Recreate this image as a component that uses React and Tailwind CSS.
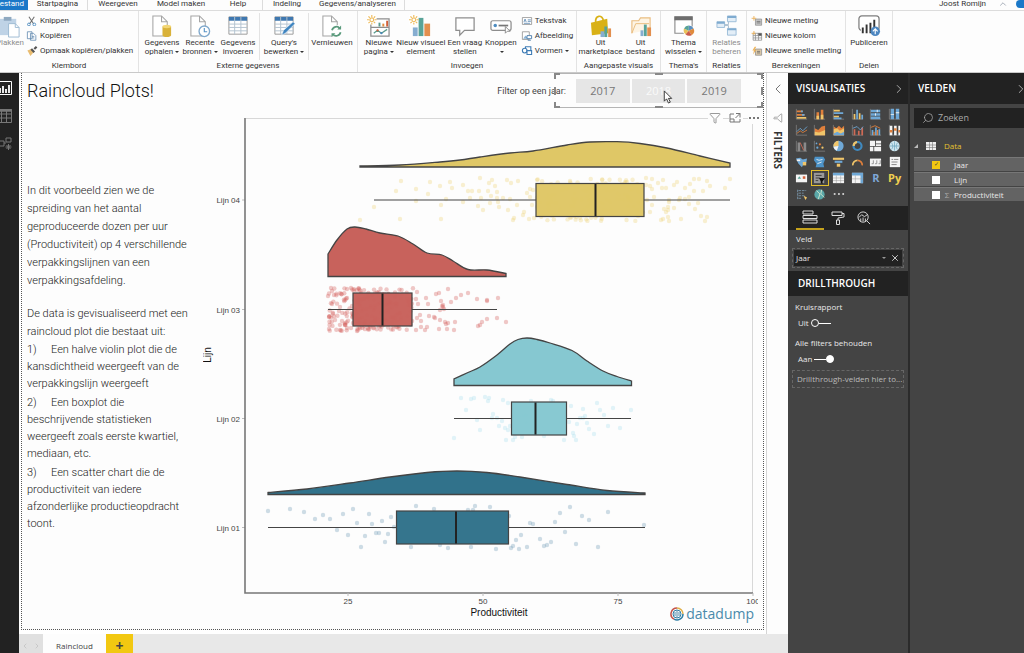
import React, { useState } from 'react';
import { ChevronLeft, ChevronRight, ChevronUp, Filter, Search, X } from 'lucide-react';

const O = '#e0803c';
const B = '#6fa8d6';
const Y = '#f0c56a';
const W = '#f4f4f4';
const G = '#8a8a8a';

// ---------- ribbon icons ----------
const Sheet = () => <path d="M3 1h9l6 6v15H3zM12 1v6h6" fill="#fff" stroke="#a5a5a5" strokeWidth="1.1" />;

const Sun = () => (
  <g stroke="#eebb5c" strokeWidth="1.2" fill="none">
    <circle cx="5" cy="5" r="2" />
    <path d="M5 0v2M5 8v2M0 5h2M8 5h2M1.5 1.5l1.4 1.4M7.1 7.1l1.4 1.4M1.5 8.5l1.4-1.4M7.1 2.9l1.4-1.4" />
  </g>
);

const SheetGrid = () => (
  <>
    <path d="M3 2h19v18H3z" fill="#fff" stroke="#9a9a9a" />
    <path d="M3 2h19v4H3z" fill="#3f78b0" />
    <path d="M3 9.500h19M3 13h19M3 16.500h19M9 2v18M15.500 2v18" stroke="#b4c3d0" />
  </>
);

const ribbonIcons = {
  paste: (
    <>
      <path d="M1 4h18v17H1z" fill="#bfd3e6" />
      <path d="M6 2h8v4H6z" fill="#8fa9c0" />
      <path d="M11 9h7l4 4v10H11z" fill="#fff" stroke="#9ebbd3" />
      <path d="M18 9v4h4" fill="none" stroke="#9ebbd3" />
    </>
  ),
  getData: (
    <>
      <Sheet />
      <path d="M13 12v9c0 2.500 9 2.500 9 0v-9z" fill="#d9b23a" />
      <ellipse cx="17.500" cy="12" rx="4.500" ry="1.800" fill="#f2d676" />
    </>
  ),
  recent: (
    <>
      <Sheet />
      <circle cx="17" cy="17" r="5.500" fill="#fff" stroke="#7fa8cc" strokeWidth="1.400" />
      <path d="M17 13.500v4h3" fill="none" stroke="#5b95c7" strokeWidth="1.200" />
    </>
  ),
  enter: <SheetGrid />,
  query: (
    <>
      <SheetGrid />
      <path d="M10 21l2-5L22 7l2 2-10 10z" fill="#3f85c0" stroke="#fff" strokeWidth=".6" />
    </>
  ),
  refresh: (
    <>
      <Sheet />
      <circle cx="17" cy="17" r="6.500" fill="#fff" />
      <path d="M12.500 16c1-4 6-5 8-2M21.500 18c-1 4-6 5-8 2" fill="none" stroke="#5a9a7c" strokeWidth="1.800" />
      <path d="M22 11v4h-4zM12 23v-4h4z" fill="#5a9a7c" />
    </>
  ),
  page: (
    <>
      <path d="M4 4h19v18H4zM4 13h19" fill="#fff" stroke="#8d8d8d" strokeWidth="1.300" />
      <path d="M7 19l4-3 4 3 6-4" fill="none" stroke="#5a9a8c" strokeWidth="1.300" />
      <path d="M12 8h2v4h-2z" fill="#5a9a8c" />
      <path d="M16 9h2v3h-2z" fill="#e08a3c" />
      <path d="M20 6h2v6h-2z" fill="#d2603a" />
      <circle cx="11" cy="16" r="1.200" fill="#d2603a" />
      <circle cx="15" cy="19" r="1.200" fill="#4a86b8" />
      <path d="M0 0h10v10H0z" fill="#fff" />
      <Sun />
    </>
  ),
  visual: (
    <>
      <path d="M4 13h5v9H4z" fill="#86add0" />
      <path d="M10 3h5v19h-5z" fill="#58a398" />
      <path d="M16 9h6v13h-6z" fill="#e28f4e" />
      <path d="M0 0h9v10H0z" fill="#fff" />
      <Sun />
    </>
  ),
  question: <path d="M3 3h19v13H12l-5 5v-5H3z" fill="#fff" stroke="#8d8d8d" strokeWidth="1.300" />,
  buttons: (
    <>
      <rect x="2" y="6" width="21" height="10" rx="2" fill="#fff" stroke="#8d8d8d" strokeWidth="1.300" />
      <circle cx="6.500" cy="11" r="1.800" fill="#4e8cc0" />
      <path d="M10 11h10" stroke="#777" strokeWidth="1.800" />
      <path d="M17 12l5 5h-3l-2 2z" fill="#fff" stroke="#8d8d8d" />
    </>
  ),
  market: (
    <>
      <path d="M2 8l17-4 1 15-17 2z" fill="#d9b116" />
      <path d="M7 8c-1-8 7-9 8-2" fill="none" stroke="#d9b116" strokeWidth="1.800" />
      <path d="M12 17h4v6h-4z" fill="#86add0" />
      <path d="M16 12h3v11h-3z" fill="#58a398" />
      <path d="M20 14h3v9h-3z" fill="#e28f4e" />
    </>
  ),
  file: (
    <>
      <path d="M3 19V6h7l2-3h10v12" fill="#fdf4e4" stroke="#e9bd80" strokeWidth="1.200" />
      <path d="M3 19l4-10h14" fill="none" stroke="#e9bd80" />
      <path d="M12 16h3v6h-3z" fill="#86add0" />
      <path d="M15.500 10h3v12h-3z" fill="#58a398" />
      <path d="M19 13h4v9h-4z" fill="#e28f4e" />
    </>
  ),
  theme: (
    <>
      <path d="M3 2h18v17H3z" fill="#fff" stroke="#8d8d8d" strokeWidth="1.200" />
      <path d="M2.500 1.500h19v4h-19z" fill="#6d6d6d" />
      <circle cx="17.500" cy="16.500" r="6" fill="#fff" />
      <path d="M17.500 16.500V11a5.500 5.500 0 0 1 5 3z" fill="#5b8fbf" />
      <path d="M17.500 16.500l5-2.500a5.500 5.500 0 0 1-2 7z" fill="#e08a3c" />
      <path d="M17.500 16.500l3 4.500a5.500 5.500 0 0 1-6.500-1z" fill="#c95a4a" />
      <path d="M17.500 16.500L14 20a5.500 5.500 0 0 1-1.500-6z" fill="#e9c25a" />
      <path d="M17.500 16.500l-5-2.500a5.500 5.500 0 0 1 5-3z" fill="#58a398" />
    </>
  ),
  relations: (
    <>
      <path d="M9 10h5V4M9 11h5v7" fill="none" stroke="#a9bdce" />
      <g fill="#e3eef7" stroke="#9dbdd8">
        <path d="M2 7h8v6H2zM13 1h9v6h-9zM13 14h9v7h-9z" />
      </g>
      <path d="M2 7h8v2H2zM13 1h9v2h-9zM13 14h9v2h-9z" fill="#7fabd0" />
    </>
  ),
  publish: (
    <>
      <rect x="2" y="1" width="21" height="15" rx="3" fill="#fff" stroke="#7d7d7d" strokeWidth="1.300" />
      <path d="M4 14h18v3H4z" fill="#fff" />
      <path d="M6 19v-6M10 19V10M14 19V8M18 19V5" stroke="#333" strokeWidth="2" />
      <circle cx="19" cy="17" r="5" fill="#4c86c0" />
      <path d="M19 20v-5M16.500 17l2.500-2.500 2.500 2.500" fill="none" stroke="#fff" strokeWidth="1.200" />
    </>
  ),
  cut: (
    <>
      <path d="M3 1l6 9M10 1L4 10" stroke="#6d6d6d" strokeWidth="1.400" />
      <circle cx="3" cy="11" r="1.800" fill="none" stroke="#4e8cc0" strokeWidth="1.200" />
      <circle cx="10" cy="11" r="1.800" fill="none" stroke="#4e8cc0" strokeWidth="1.200" />
    </>
  ),
  copy: (
    <g fill="#fff" stroke="#5c86ad">
      <path d="M1 1h6v9H1zM5 3h4l3 3v6H5z" />
      <path d="M7 7h3M7 9h3" />
    </g>
  ),
  brush: (
    <>
      <path d="M1 6l5-2 3 4-4 5z" fill="#e9bd72" />
      <path d="M5 5l2-2 4 4-2 2zM9 3l3-3 2 2-3 3z" fill="#555" />
    </>
  ),
  textbox: (
    <>
      <path d="M1 2h12v9H1z" fill="#fff" stroke="#8d8d8d" />
      <path d="M3 8l1.500-4L6 8M8 5h4M8 7h4M3 9.500h8" fill="none" stroke="#4e7fac" />
    </>
  ),
  image: (
    <>
      <path d="M1 1h9v10H1z" fill="#fff" stroke="#8d8d8d" />
      <path d="M2 10l3-4 4 4z" fill="#8cb4d6" />
      <path d="M7 6h6v4H7zM8 12h4" fill="#fff" stroke="#4e7fac" strokeWidth="1.200" />
    </>
  ),
  shapes: (
    <g fill="#fff" stroke="#3f7cb5" strokeWidth="1.400">
      <path d="M5 1h7v7H5z" />
      <circle cx="4" cy="6" r="3" />
      <path d="M7 6h6v5H7z" />
    </g>
  ),
  measure: (
    <>
      <path d="M5 4h8v8H5z" fill="#c9c9c9" stroke="#8d8d8d" />
      <path d="M6.500 7h5M6.500 9h5" stroke="#666" />
      <path d="M3 0v6M0 3h6" stroke="#edb45c" strokeWidth="1.200" />
    </>
  ),
  column: (
    <>
      <path d="M2 3h11v9H2zM2 6h11M2 9h11M5 3v9" fill="#fff" stroke="#8d8d8d" />
      <path d="M8 3h5v3H8z" fill="#555" />
      <path d="M9 3v9" stroke="#8d8d8d" />
      <path d="M3 0v5M0 3h5" stroke="#edb45c" strokeWidth="1.200" />
    </>
  ),
  quick: (
    <>
      <path d="M5 4h8v8H5z" fill="#dcc9a8" stroke="#8d8d8d" />
      <path d="M4 1L1 6h2l-1 5 4-6H4l2-4z" fill="#edb45c" />
      <path d="M7 7h4M7 9h4" stroke="#666" />
    </>
  ),
};

const Icon = ({ name, small }) => (
  <svg
    viewBox={small ? '0 0 14 13' : '0 0 25 24'}
    className={small ? 'h-2.5 w-3 shrink-0' : 'h-[23px] w-6 shrink-0'}
    aria-hidden="true"
  >
    {ribbonIcons[name]}
  </svg>
);

const Caret = () => <span className="ml-0.5 inline-block border-x-2 border-t-2 border-x-transparent border-t-[#333] align-middle" />;

const BigButton = ({ icon, lines, caret, muted, width = 'w-10' }) => (
  <button className={`flex shrink-0 flex-col items-center pt-0.5 leading-[9px] whitespace-nowrap ${width} ${muted ? 'text-[#8c8c8c]' : ''}`}>
    <Icon name={icon} />
    {lines.map((line, i) => (
      <span key={i} className="block h-[9px]">
        {line}
        {caret && i === lines.length - 1 && <Caret />}
      </span>
    ))}
  </button>
);

const SmallButton = ({ icon, text, caret }) => (
  <button className="flex items-center gap-0.5 leading-[15px] whitespace-nowrap">
    <Icon name={icon} small />
    <span>{text}{caret && <Caret />}</span>
  </button>
);

const Group = ({ title, width, children }) => (
  <section className={`flex shrink-0 flex-col border-r border-[#e3e3e3] ${width}`}>
    <div className="flex min-h-0 flex-1 justify-center pt-0.5">{children}</div>
    <h2 className="text-center leading-[12px]">{title}</h2>
  </section>
);

const Ribbon = () => (
  <header className="shrink-0 overflow-hidden border-b border-[#c9c9c9] bg-[#fdfdfd] font-['Roboto','Open_Sans',sans-serif] text-[8px] text-[#333]">
    <nav className="flex h-[11px] items-stretch border-b border-[#dcdcdc] leading-[8px] whitespace-nowrap">
      <button className="flex w-7 items-center justify-end bg-[#1b78c8] pr-1 pb-0.5 text-white">Bestand</button>
      <button className="w-[60px] border-r border-[#dcdcdc] pb-0.5">Startpagina</button>
      <button className="w-[60px] pb-0.5">Weergeven</button>
      <button className="w-[66px] pb-0.5">Model maken</button>
      <button className="w-[49px] border-r border-[#dcdcdc] pb-0.5">Help</button>
      <button className="w-12 pb-0.5">Indeling</button>
      <button className="w-[94px] border-r border-[#dcdcdc] pb-0.5">Gegevens/analyseren</button>
      <div className="ml-auto flex items-center gap-3 pb-0.5">
        <span>Joost Romijn</span>
        <ChevronUp className="size-2.5 text-gray-400" />
        <span className="-ml-1 size-2 rounded-l-full bg-[#1b78c8]" />
      </div>
    </nav>
    <div className="flex h-[61px]">
      <Group title="Klembord" width="w-[139px]">
        <div className="flex flex-1 gap-0.5">
          <div className="-ml-1">
            <BigButton icon="paste" lines={['Plakken']} muted width="w-7" />
          </div>
          <div className="flex flex-col">
            <SmallButton icon="cut" text="Knippen" />
            <SmallButton icon="copy" text="Kopiëren" />
            <SmallButton icon="brush" text="Opmaak kopiëren/plakken" />
          </div>
        </div>
      </Group>
      <Group title="Externe gegevens" width="w-[219px]">
        <BigButton icon="getData" lines={['Gegevens', 'ophalen']} caret />
        <BigButton icon="recent" lines={['Recente', 'bronnen']} caret width="w-9" />
        <BigButton icon="enter" lines={['Gegevens', 'invoeren']} />
        <div className="mx-px flex border-x border-[#e3e3e3]">
          <BigButton icon="query" lines={["Query's", 'bewerken']} caret width="w-12" />
        </div>
        <BigButton icon="refresh" lines={['Vernieuwen']} width="w-11" />
      </Group>
      <Group title="Invoegen" width="w-[219px]">
        <BigButton icon="page" lines={['Nieuwe', 'pagina']} caret width="w-9" />
        <BigButton icon="visual" lines={['Nieuw visueel', 'element']} width="w-12" />
        <BigButton icon="question" lines={['Een vraag', 'stellen']} />
        <BigButton icon="buttons" lines={['Knoppen', '']} caret width="w-8" />
        <div className="flex flex-col pl-1">
          <SmallButton icon="textbox" text="Tekstvak" />
          <SmallButton icon="image" text="Afbeelding" />
          <SmallButton icon="shapes" text="Vormen" caret />
        </div>
      </Group>
      <Group title="Aangepaste visuals" width="w-[84px]">
        <BigButton icon="market" lines={['Uit', 'marketplace']} width="w-11" />
        <BigButton icon="file" lines={['Uit', 'bestand']} width="w-9" />
      </Group>
      <Group title="Thema's" width="w-[46px]">
        <BigButton icon="theme" lines={['Thema', 'wisselen']} caret />
      </Group>
      <Group title="Relaties" width="w-10">
        <BigButton icon="relations" lines={['Relaties', 'beheren']} muted width="w-9" />
      </Group>
      <Group title="Berekeningen" width="w-[99px]">
        <div className="flex flex-1 flex-col pl-1">
          <SmallButton icon="measure" text="Nieuwe meting" />
          <SmallButton icon="column" text="Nieuwe kolom" />
          <SmallButton icon="quick" text="Nieuwe snelle meting" />
        </div>
      </Group>
      <Group title="Delen" width="w-[47px]">
        <BigButton icon="publish" lines={['Publiceren']} />
      </Group>
    </div>
  </header>
);

// ---------- chart ----------
// small seeded generator so the jitter is the same on every render
const jitter = (count, seed, x0, x1, y0, y1) => {
  let s = seed;
  const next = () => {
    s = (s * 16807) % 2147483647;
    return s / 2147483647;
  };
  return Array.from({ length: count }, () => [x0 + next() * (x1 - x0), y0 + next() * (y1 - y0)]);
};

const lines = [
  {
    name: 'Lijn 04', fill: '#dfc766', dot: '#ecd478', base: 167, mid: 200, box: [536, 644], median: 595.5, whisker: [374, 730],
    curve: [[360, 166], [400, 165], [440, 162], [460, 160], [480, 157], [510, 153], [533, 151], [567, 145], [590, 142], [617, 141.7], [640, 143.5], [667, 148], [700, 156], [730, 163]],
    dots: [
      [401, 181], [396, 191], [416, 189], [416, 201], [374, 207], [360, 220], [400, 219], [430, 182], [440, 186], [428, 194], [450, 182], [452, 188],
      [463, 185], [446, 199], [463, 202], [441, 205], [441, 219], [468, 191], [472, 191], [470, 198], [480, 178], [479, 191], [481, 198], [478, 206],
      [483, 210], [492, 180], [489, 183], [488, 191], [495, 186], [491, 196], [497, 192], [497, 198], [498, 202], [490, 203], [499, 207], [503, 198],
      [507, 180], [511, 183], [518, 181], [510, 199], [508, 210], [517, 205], [513, 220], [514, 218], [523, 215], [524, 212], [529, 219], [534, 218],
      [527, 193], [530, 189], [533, 190], [530, 197], [532, 205], [646, 178], [652, 179], [646, 185], [650, 186], [652, 189], [654, 197], [647, 200],
      [652, 205], [650, 212], [663, 180], [662, 188], [666, 188], [658, 183], [677, 182], [674, 185], [685, 188], [669, 200], [674, 208], [680, 198],
      [679, 200], [685, 199], [666, 212], [668, 217], [661, 220], [669, 221], [681, 219], [690, 184], [694, 179], [699, 179], [707, 181], [710, 186],
      [703, 191], [694, 191], [689, 204], [695, 209], [698, 203], [701, 216], [707, 217], [705, 221], [730, 179], [725, 188], [689, 197], [669, 202],
      [668, 207], [664, 209], [663, 219], [668, 210],
      ...jitter(170, 11, 537, 643, 179, 221),
    ],
  },
  {
    name: 'Lijn 03', fill: '#c8625c', dot: '#d45e5c', base: 276.5, mid: 309.5, box: [353, 412], median: 382.5, whisker: [328, 497],
    curve: [[328, 254], [337, 240], [347, 229], [355, 227], [366, 229], [380, 233], [398, 236], [413, 244], [427, 253], [442, 255], [453, 261], [468, 269.5], [487, 270], [506, 273.5]],
    dots: [
      [331, 288], [328, 296], [332, 291], [334, 295], [347, 289], [351, 288], [347, 298], [332, 304], [340, 307], [329, 317], [339, 311], [335, 320],
      [342, 321], [329, 329], [340, 330], [345, 325], [347, 328], [351, 328], [357, 331], [417, 292], [416, 299], [418, 304], [428, 304], [426, 298],
      [436, 294], [439, 293], [448, 289], [441, 301], [443, 307], [443, 305], [444, 309], [442, 306], [451, 302], [456, 298], [461, 295], [468, 293],
      [477, 299], [487, 301], [487, 300], [498, 298], [497, 318], [506, 322], [487, 319], [482, 322], [480, 325], [478, 326], [454, 330], [455, 322],
      [448, 323], [445, 322], [447, 329], [439, 329], [440, 320], [434, 317], [435, 318], [429, 316], [440, 310], [421, 321], [417, 318], [421, 327],
      [427, 327], [425, 330], [416, 330], [420, 315], [446, 324],
      ...jitter(50, 77, 329, 353, 288, 331),
      ...jitter(170, 29, 353, 413, 288, 331),
    ],
  },
  {
    name: 'Lijn 02', fill: '#86c8d1', dot: '#a9e0ee', base: 385.5, mid: 418.5, box: [511.5, 566.5], median: 535.5, whisker: [454, 631],
    curve: [[454, 379], [468, 372.5], [480, 367], [497, 355], [510, 344], [518, 339.5], [527, 338], [537, 339.5], [550, 343], [572, 350.5], [587, 361], [603, 371], [617, 376.5], [631.5, 381]],
    dots: [
      [461, 398], [471, 399], [474, 398], [485, 397], [489, 398], [488, 401], [503, 400], [508, 403], [466, 410], [493, 414], [492, 418], [477, 420],
      [497, 418], [502, 421], [499, 426], [505, 428], [508, 430], [480, 430], [454, 438], [506, 440], [513, 440], [515, 437], [510, 426], [531, 401],
      [551, 400], [553, 401], [571, 406], [597, 403], [583, 409], [600, 410], [613, 408], [631, 410], [604, 415], [585, 416], [580, 418], [583, 418],
      [569, 422], [577, 424], [587, 423], [589, 429], [594, 434], [608, 426], [620, 428], [573, 433], [574, 436], [576, 440], [564, 440], [544, 436],
      [522, 437],
      ...jitter(30, 5, 514, 564, 404, 433),
    ],
  },
  {
    name: 'Lijn 01', fill: '#31728b', dot: '#6f9ab5', base: 494.5, mid: 527.5, box: [396.5, 508.5], median: 456, whisker: [268, 645],
    curve: [[268, 492.5], [307, 489], [350, 483], [390, 477], [427, 472.5], [457, 471], [487, 472.5], [520, 477], [567, 484.5], [607, 490.5], [645, 493]],
    dots: [
      [268, 511], [290, 509], [304, 512], [315, 519], [323, 515], [330, 519], [343, 514], [353, 509], [337, 530], [348, 535], [357, 523], [369, 514],
      [372, 524], [382, 521], [391, 517], [394, 527], [365, 536], [376, 533], [379, 533], [388, 534], [385, 542], [361, 547], [416, 506], [434, 509],
      [475, 506], [468, 510], [473, 510], [490, 507], [411, 547], [440, 545], [448, 548], [471, 547], [496, 549], [509, 516], [511, 548], [513, 546],
      [519, 549], [516, 540], [521, 535], [527, 547], [530, 523], [533, 524], [540, 539], [544, 546], [547, 545], [551, 542], [555, 522], [560, 513],
      [565, 532], [570, 507], [582, 516], [589, 520], [576, 544], [598, 547], [608, 512], [644, 525],
    ],
  },
];

const smooth = (pts) => {
  let d = `L${pts[0][0]} ${pts[0][1]}`;
  for (let i = 0; i < pts.length - 1; i++) {
    const p0 = pts[i - 1] || pts[i];
    const p1 = pts[i];
    const p2 = pts[i + 1];
    const p3 = pts[i + 2] || p2;
    d += `C${p1[0] + (p2[0] - p0[0]) / 6} ${p1[1] + (p2[1] - p0[1]) / 6} ${p2[0] - (p3[0] - p1[0]) / 6} ${p2[1] - (p3[1] - p1[1]) / 6} ${p2[0]} ${p2[1]}`;
  }
  return d;
};

const Raincloud = ({ line }) => {
  const first = line.curve[0][0];
  const last = line.curve[line.curve.length - 1][0];
  const [q1, q3] = line.box;
  return (
    <g>
      <path d={`M${first} ${line.base}${smooth(line.curve)}L${last} ${line.base}Z`} fill={line.fill} stroke="#444" strokeWidth="1.3" />
      <g fill={line.dot}>
        {line.dots.map(([x, y], i) => <circle key={i} cx={x} cy={y} r="2.2" opacity="0.34" />)}
      </g>
      <path d={`M${line.whisker[0]} ${line.mid}H${q1}M${q3} ${line.mid}H${line.whisker[1]}`} stroke="#444" strokeWidth="1.2" />
      <rect x={q1} y={line.mid - 16.5} width={q3 - q1} height="33" fill={line.fill} fillOpacity="0.98" stroke="#444" strokeWidth="1.2" />
      <path d={`M${line.median} ${line.mid - 16}v32`} stroke="#222" strokeWidth="2" />
      <text x="240" y={line.mid + 3} textAnchor="end">{line.name}</text>
      <path d={`M242 ${line.mid}h3`} stroke="#bbb" />
    </g>
  );
};

const Chart = () => (
  <svg viewBox="203 112 555 512" className="block h-auto w-full font-['Liberation_Sans',sans-serif]" fontSize="8" fill="#444" role="img" aria-label="Raincloud plot">
    <path d="M246 118.500H708M723 118.500h6M743 118.500h5M752.500 124V593" stroke="#d8d8d8" fill="none" />
    {lines.map((line) => <Raincloud key={line.name} line={line} />)}
    <path d="M245 118V593H753" fill="none" stroke="#777" strokeWidth="1.6" />
    <path d="M348 593v3M483 593v3M618 593v3M753 593v3" stroke="#bbb" />
    {[25, 50, 75, 100].map((v) => <text key={v} x={213 + v * 5.4} y="604" textAnchor="middle">{v}</text>)}
    <text x="499" y="616" textAnchor="middle" fontSize="10" fill="#111">Productiviteit</text>
    <text transform="translate(211 355) rotate(-90)" textAnchor="middle" fontSize="10" fill="#111">Lijn</text>
  </svg>
);

const Logo = () => (
  <div className="flex items-center gap-0.5 font-['Open_Sans',sans-serif] text-[14px] leading-[16px] text-[#4a8aab]">
    <svg viewBox="0 0 14 14" className="size-3.5" fill="none" aria-hidden="true">
      <path d="M7 1a6 6 0 0 1 6 6" stroke="#e0b04a" strokeWidth="1.500" />
      <path d="M13 7a6 6 0 0 1-9 5.200" stroke="#2f7fa5" strokeWidth="1.500" />
      <path d="M4 12.200A6 6 0 0 1 7 1" stroke="#c4544a" strokeWidth="1.500" />
      <circle cx="7" cy="7" r="4" stroke="#2f7fa5" />
      <path d="M7 3.500v7M5 5v4M9 5v4" stroke="#3b7ea0" strokeWidth=".9" />
    </svg>
    <span>datadump</span>
  </div>
);

const YearSlicer = () => {
  const [year, setYear] = useState(2018);
  return (
    <div className="relative -ml-3 flex w-[209px] items-center border-y border-[#b5b5b5]">
      <div className="flex flex-1 gap-0.5 px-[22px] text-[11px] leading-[24px]">
        {[2017, 2018, 2019].map((y) => (
          <button
            key={y}
            onClick={() => setYear(y)}
            className={`flex-1 bg-[#e6e6e6] ${y === year ? 'text-[#fafafa]' : 'text-[#777]'}`}
          >
            {y}
          </button>
        ))}
      </div>
      {/* selection handles */}
      <i className="absolute -top-px left-0 size-1.5 border-t-2 border-l-2 border-[#888]" />
      <i className="absolute -top-px right-0 size-1.5 border-t-2 border-r-2 border-[#888]" />
      <i className="absolute -bottom-px left-0 size-1.5 border-b-2 border-l-2 border-[#888]" />
      <i className="absolute right-0 -bottom-px size-1.5 border-r-2 border-b-2 border-[#888]" />
      <i className="absolute -top-px left-1/2 h-0.5 w-2 -translate-x-1/2 bg-[#888]" />
      <i className="absolute -bottom-px left-1/2 h-0.5 w-2 -translate-x-1/2 bg-[#888]" />
      <i className="absolute top-1/2 left-0 h-2 w-0.5 -translate-y-1/2 bg-[#888]" />
      <i className="absolute top-1/2 right-0 h-2 w-0.5 -translate-y-1/2 bg-[#888]" />
      <svg viewBox="0 0 10 15" className="absolute top-4 left-[109px] h-3.5 w-2.5" aria-hidden="true">
        <path d="M1 1v11l2.500-2.500L5.500 14l2-1-2-4H9z" fill="#fff" stroke="#333" />
      </svg>
    </div>
  );
};

const Num = ({ n }) => <span className="inline-block w-6">{n})</span>;

const Report = () => (
  <main className="mx-0.5 mb-1 flex min-h-0 flex-1 flex-col overflow-hidden border border-t-0 border-dotted border-[#555] bg-[#fdfdfd]">
    <div className="flex h-[35px] items-stretch justify-between">
      <h1 className="pl-[5px] font-['Roboto',sans-serif] text-[18px] leading-[36px] font-light text-[#111]">Raincloud Plots!</h1>
      <div className="flex">
        <span className="font-['Roboto',sans-serif] text-[9px] leading-[36px] text-[#444]">Filter op een jaar:</span>
        <YearSlicer />
      </div>
    </div>
    <div className="flex items-start pt-1">
      <div className="w-[181px] shrink-0 pt-[70px] pl-[5px] font-['Roboto',sans-serif] text-[11px] leading-[17px] font-light whitespace-nowrap text-[#222]">
        <p className="mb-[15px] leading-[18px]">
          In dit voorbeeld zien we de<br />
          spreiding van het aantal<br />
          geproduceerde dozen per uur<br />
          (Productiviteit) op 4 verschillende<br />
          verpakkingslijnen van een<br />
          verpakkingsafdeling.
        </p>
        <p className="leading-[18px]">
          De data is gevisualiseerd met een<br />
          raincloud plot die bestaat uit:
        </p>
        <ol className="flex flex-col gap-0.5">
          <li><Num n={1} />Een halve violin plot die de<br />kansdichtheid weergeeft van de<br />verpakkingslijn weergeeft</li>
          <li><Num n={2} />Een boxplot die<br />beschrijvende statistieken<br />weergeeft zoals eerste kwartiel,<br />mediaan, etc.</li>
          <li><Num n={3} />Een scatter chart die de<br />productiviteit van iedere<br />afzonderlijke productieopdracht<br />toont.</li>
        </ol>
      </div>
      <div className="relative mr-[5px] min-w-0 flex-1">
        <Chart />
        <div className="absolute top-0 -right-px flex items-center gap-2 text-[#777]">
          <Filter className="size-3" strokeWidth={1.5} />
          <svg viewBox="0 0 12 12" className="size-3" fill="none" stroke="currentColor" aria-hidden="true">
            <path d="M5 2H1v8h10V7M1 7h4v3M7 1.500h4v4M11 1.500L6.500 6" />
          </svg>
          <button aria-label="Meer opties" className="flex gap-0.5">
            <i className="size-0.5 bg-[#777]" />
            <i className="size-0.5 bg-[#777]" />
            <i className="size-0.5 bg-[#777]" />
          </button>
        </div>
        <div className="absolute right-1 bottom-0.5"><Logo /></div>
      </div>
    </div>
  </main>
);

// ---------- side panes ----------
const axis = <path d="M1.500 1v12H14" fill="none" stroke={G} strokeWidth=".8" />;

const visuals = [
  <>{axis}<path d="M2 3h7v2H2zM2 7h9v2H2z" fill={O} /><path d="M2 10.500h11v2H2z" fill={Y} /><path d="M7 3h2v2H7zM8 7h3v2H8z" fill={B} /></>,
  <>{axis}<path d="M4 5h3v8H4zM9 2h3v11H9z" fill={O} /><path d="M4 9h3v4H4zM9 8h3v5H9z" fill={Y} /></>,
  <>{axis}<path d="M2 2h7v2H2zM2 9h6v2H2z" fill={Y} /><path d="M2 5h11v2H2zM2 11h9v2H2z" fill={B} /></>,
  <>{axis}<path d="M3 7h2v6H3zM9 6h2v7H9z" fill={Y} /><path d="M6 2h2v11H6zM12 8h2v5h-2z" fill={B} /></>,
  <>{axis}<path d="M2 2h11v3H2zM2 6h11v3H2zM2 10h11v3H2z" fill={B} /><path d="M9 2h1v3H9zM7 6h1v3H7z" fill={W} /></>,
  <>{axis}<path d="M3 1h4v12H3zM9 1h4v12H9z" fill={B} /><path d="M3 7h4v1H3zM9 5h4v1H9z" fill={W} /></>,
  <>{axis}<path d="M2 9l4-4 3 3 5-5" fill="none" stroke={B} /><path d="M2 11l4-3 3 2 5-3" fill="none" stroke={O} /></>,
  <>{axis}<path d="M2 5l4 2 4-4 4-1v11H2z" fill={O} /><path d="M2 9l5 1 7-3v6H2z" fill={Y} /></>,
  <>{axis}<path d="M2 3l3 2 3-3 3 3 3-3v11H2z" fill={O} /><path d="M2 6l4-1 3 3 5-3v8H2z" fill={Y} /><path d="M2 11l4-2 4 2 4-2v4H2z" fill={B} /></>,
  <>{axis}<path d="M3 6h2v7H3zM8 8h2v5H8zM12 4h2v9h-2z" fill="#d06a55" /><path d="M2 5l5-2 4 4 3-4" stroke={B} fill="none" /></>,
  <>{axis}<path d="M3 7h2v6H3zM7 4h2v9H7zM11 6h2v7h-2z" fill={B} /><path d="M5 9h1.500v4H5zM9 7h1.500v6H9z" fill={O} /><path d="M2 4l5-2 6 3" stroke={O} fill="none" /></>,
  <>{axis}<path d="M2 2h3v11H2zM7 2h3v11H7zM12 2h2v11h-2z" fill={W} /><path d="M2 7h3v3H2zM7 5h3v3H7zM12 7h2v3h-2z" fill={O} /></>,
  <>{axis}<path d="M3 3h3v10H3zM10 3h3v10h-3z" fill={G} /><path d="M6 3l4 9" stroke="#d06a55" /></>,
  <>{axis}<circle cx="5" cy="9" r="1.300" fill={B} /><circle cx="8" cy="5" r="1.300" fill={O} /><circle cx="11" cy="9" r="1.300" fill={Y} /><circle cx="4" cy="4" r="1" fill={B} /></>,
  <><circle cx="7.500" cy="7" r="6" fill={B} /><path d="M7.500 7V1A6 6 0 0 0 1.500 8z" fill={Y} /><path d="M7.500 7L1.500 8a6 6 0 0 0 4 4.500z" fill={W} /></>,
  <><circle cx="7.500" cy="7" r="4.700" fill="none" stroke="#3f8ac0" strokeWidth="2.500" /><path d="M3 7a4.700 4.700 0 0 1 4-4.600" fill="none" stroke={Y} strokeWidth="2.500" /></>,
  <path d="M1 1h6v6H1zM8 1h6v3H8zM8 5h6v2H8zM1 8h4v5H1zM6 8h8v5H6z" fill={W} />,
  <><circle cx="7.500" cy="7" r="6" fill="#cfe6ef" /><path d="M2 7h11M7.500 1.500v11M4 3c2 3 2 6 0 8M11 3c-2 3-2 6 0 8" stroke="#5a9ab5" strokeWidth=".7" fill="none" /></>,
  <><path d="M1 3l5-1 3 2 5-1-1 5-3 1-2 4-4-4z" fill={B} /><path d="M9 7h4v4H9z" fill={Y} /><path d="M2 4h4v2H2z" fill={W} /></>,
  <><path d="M2 1h10l2 3-2 5 1 4H3l1-4-3-4z" fill="#4d93c8" /><path d="M4 4l3 1 4-1M5 9l5-2" stroke={W} fill="none" /></>,
  <><path d="M1 2h13v2.500H1z" fill={Y} /><path d="M3 5.500h9V8H3z" fill={B} /><path d="M5.500 9h4v3.500h-4z" fill={Y} /></>,
  <><path d="M2 11a5.500 5.500 0 0 1 5.500-6" fill="none" stroke={Y} strokeWidth="2" /><path d="M7.500 5A5.500 5.500 0 0 1 13 11" fill="none" stroke={O} strokeWidth="2" /></>,
  <><path d="M1 3h13v9H1z" fill={W} /><path d="M3 9h2V5M7 9h2V5M11 9h2V5" stroke="#888" fill="none" /></>,
  <><path d="M2 1h12v12H2z" fill={W} /><path d="M4 4h2M7 4h5M4 7h7M4 10h6" stroke="#777" /></>,
  <><path d="M1 3h13v9H1z" fill={W} /><path d="M3 8l2-3 2 3z" fill="#58a398" /><path d="M9 5h3v3H9z" fill="#d2603a" /></>,
  <><path d="M1 1h12v12H1z" fill="#999" /><path d="M3 4h7M3 7h5M3 10h3" stroke="#333" /><path d="M7 7h7l-3 4v3l-2-1v-2z" fill="#111" /></>,
  <><path d="M1 1h13v12H1z" fill={W} /><path d="M1 1h13v3H1z" fill={B} /><path d="M1 7h13M1 10h13M5 4v9M10 4v9" stroke="#999" strokeWidth=".6" /></>,
  <><path d="M1 1h13v12H1z" fill={W} /><path d="M1 1h13v3H1zM11 4h3v9h-3z" fill={B} /><path d="M1 8h13M5 4v9" stroke="#999" strokeWidth=".6" /></>,
  'R',
  'Py',
  <><path d="M3 2v11M4 3h9M4 6h6M4 9h8M4 12h4" stroke="#7b98ad" strokeDasharray="3 1" /><path d="M10 9l4 2-2 3z" fill={Y} /></>,
  <><circle cx="7.500" cy="7.500" r="6" fill="#5aa7a8" /><path d="M4 3l4 4-2 6M10 2l-1 5 4 4" stroke="#d8ead0" fill="none" /></>,
  <path d="M2 6h2v2H2zM7 6h2v2H7zM12 6h2v2h-2z" fill={W} />,
];

const PaneHeader = ({ title, edge = 'mr-0.5' }) => (
  <div className="flex h-[31px] items-center justify-between bg-[#222] pl-2">
    <h2 className="text-[10px] font-semibold text-white">{title}</h2>
    <ChevronRight className={`size-3.5 text-[#bbb] ${edge}`} strokeWidth={1.5} />
  </div>
);

const Toggle = ({ label, state, checked }) => (
  <div className="mb-1 px-[7px]">
    <p className="leading-[18px]">{label}</p>
    <label className="flex items-center gap-1 pl-[3px] leading-[14px]">
      {state}
      <input
        type="checkbox"
        defaultChecked={checked}
        aria-label={label}
        className="-ml-0.5 flex w-5 appearance-none items-center before:size-2 before:rounded-full before:border before:border-white after:h-px after:flex-1 after:bg-white checked:flex-row-reverse checked:before:bg-white"
      />
    </label>
  </div>
);

const Visualizations = () => (
  <aside className="flex w-[122px] shrink-0 flex-col border-r-2 border-[#2b2b2b] bg-[#444] text-[8px] text-[#e8e8e8]">
    <PaneHeader title="VISUALISATIES" />
    <div className="grid grid-cols-6 pt-0.5 pr-1 pl-1">
      {visuals.map((v, i) => (
        <button
          key={i}
          aria-label={`Visual ${i + 1}`}
          className={`flex h-4 items-center justify-center text-[11px] leading-[16px] font-bold ${i === 25 ? 'outline-1 -outline-offset-1 outline-[#e3bf2c]' : ''} ${v === 'R' ? 'text-[#7fa8d6]' : v === 'Py' ? 'text-[10px] text-[#f0cf50]' : 'text-white'}`}
        >
          {typeof v === 'string' ? v : <svg viewBox="0 0 15 14" className="h-3 w-[13px]">{v}</svg>}
        </button>
      ))}
    </div>
    <div className="mt-1 flex h-6 items-stretch bg-[#222] pl-2">
      <button aria-label="Velden" className="flex w-7 items-center justify-center border-b-2 border-[#c5a21c]">
        <svg viewBox="0 0 16 14" className="h-3.5 w-4" fill="none" stroke="#ddd">
          <path d="M1 1h10v3H1zM1 5.500h14v3H1zM1 10h14v3H1z" />
        </svg>
      </button>
      <button aria-label="Opmaak" className="flex w-7 items-center justify-center">
        <svg viewBox="0 0 14 14" className="size-3.5" fill="none" stroke="#ddd">
          <path d="M1 1h10v3.500H1zM11 2.500h2V6L7 7v2M5.500 9h3v4.500h-3z" />
        </svg>
      </button>
      <button aria-label="Analyse" className="flex w-6 items-center justify-center">
        <svg viewBox="0 0 15 15" className="size-3.5" fill="none" stroke="#ddd">
          <circle cx="6.500" cy="6.500" r="5.500" />
          <path d="M10.500 10.500L14 14M2 7l3-3 3 2 3-2M4 8v3M6.500 7v4M9 8v3" />
        </svg>
      </button>
    </div>
    <p className="px-2 leading-[18px]">Veld</p>
    <div className="mx-1 border border-dashed border-[#666] p-px">
      <div className="flex items-center bg-[#222] pr-0.5 pl-0.5 leading-[16px]">
        <span>Jaar</span>
        <span className="mr-1 ml-auto border-x-2 border-t-2 border-x-transparent border-t-[#999]" />
        <button aria-label="Verwijderen"><X className="size-2.5" /></button>
      </div>
    </div>
    <h2 className="mt-[3px] mb-0.5 bg-[#222] pl-2.5 text-[10px] leading-[25px] font-semibold text-white">DRILLTHROUGH</h2>
    <Toggle label="Kruisrapport" state="Uit" />
    <Toggle label="Alle filters behouden" state="Aan" checked />
    <p className="mx-1 border border-dashed border-[#666] pl-1 leading-[16px] whitespace-nowrap text-[#bbb]">Drillthrough-velden hier to...</p>
  </aside>
);

const Fields = () => (
  <aside className="w-[114px] shrink-0 overflow-hidden bg-[#444] text-[8px] text-[#e8e8e8]">
    <PaneHeader title="VELDEN" edge="-mr-1" />
    <label className="mt-1 ml-1 flex h-5 items-center gap-1 bg-[#222] pl-2">
      <Search className="size-3 -scale-x-100 text-[#aaa]" strokeWidth={1.5} />
      <input aria-label="Zoeken" placeholder="Zoeken" className="w-20 bg-transparent text-[9px] placeholder:text-[#aaa] focus:outline-none" />
    </label>
    <div className="mt-2.5 mb-[3px] flex h-4 items-center pl-1 text-[#e6c230]">
      <svg viewBox="0 0 5 5" className="size-1"><path d="M5 0v5H0z" fill="#bbb" /></svg>
      <svg viewBox="0 0 10 10" className="mr-2 ml-2 size-2.5">
        <path d="M0 1h10v8H0z" fill="#eee" />
        <path d="M0 4h10M0 6.500h10M3.500 1v8M6.500 1v8" stroke="#777" strokeWidth=".6" />
      </svg>
      Data
    </div>
    <ul className="flex flex-col gap-px pl-1">
      {['Jaar', 'Lijn', 'Productiviteit'].map((f) => (
        <li key={f}>
          <label className="flex h-3.5 items-center border-t border-[#777] bg-[#636363] pl-[18px]">
            <input
              type="checkbox"
              defaultChecked={f === 'Jaar'}
              className="flex size-2 appearance-none items-center justify-center bg-white text-[6px] checked:bg-[#f2c811] checked:before:text-[#444] checked:before:content-['✓']"
            />
            <span className="w-[14px] text-center text-[#aaa]">{f === 'Productiviteit' ? 'Σ' : ''}</span>
            <span>{f}</span>
          </label>
        </li>
      ))}
    </ul>
  </aside>
);

const Rail = () => (
  <nav className="flex w-[19px] shrink-0 flex-col items-end gap-3.5 overflow-hidden bg-[#222] pt-2 pr-[7px]">
    <button aria-label="Rapport">
      <svg viewBox="0 0 16 14" className="h-3.5 w-4" stroke="#fff" fill="none">
        <path d="M.5 .5h15v13H.5z" />
        <path d="M4 12V7M7 12V5M10 12V8M13 12V4" strokeWidth="1.800" />
      </svg>
    </button>
    <button aria-label="Gegevens">
      <svg viewBox="0 0 16 14" className="h-3.5 w-4" stroke="#777" fill="none">
        <path d="M.5 .5h15v13H.5zM1 5h15M1 9h15M5.500 1v12M10.500 1v12" />
        <path d="M0 1.500h16" strokeWidth="2.500" />
      </svg>
    </button>
    <button aria-label="Model">
      <svg viewBox="0 0 16 14" className="h-3.5 w-4" stroke="#777" fill="none">
        <path d="M2 4h6v5H2zM10 1h5v4h-5zM8 6h2M12.500 7v6M9.500 10h6M10.500 8l4 4M14.500 8l-4 4" />
      </svg>
    </button>
  </nav>
);

const App = () => {
  return (
    <div className="flex h-screen flex-col overflow-hidden bg-white font-['Open_Sans','Noto_Sans',sans-serif]">
      <Ribbon />
      <div className="flex min-h-0 flex-1">
        <Rail />
        <div className="flex min-w-0 flex-1 flex-col">
          <div className="flex min-h-0 flex-1">
            <Report />
            <aside className="flex w-[22px] shrink-0 flex-col items-center border-l border-[#d5d5d5] bg-[#fdfdfd] pt-2 text-[#333]">
              <ChevronLeft className="mb-4 size-4 text-[#777]" strokeWidth={1.5} />
              <Filter className="size-2.5 rotate-90 text-[#777]" strokeWidth={1.5} />
              <h2 className="mt-2 text-[10px] leading-[12px] font-bold [writing-mode:vertical-rl]">FILTERS</h2>
            </aside>
          </div>
          <footer className="flex h-[19px] shrink-0 items-stretch overflow-hidden bg-[#e8e8e8] text-[8px] leading-[24px] text-[#444]">
            <div className="flex w-6 items-center justify-around bg-[#e0e0e0] pt-1 text-[#bbb]">
              <ChevronLeft className="size-2" />
              <ChevronRight className="size-2" />
            </div>
            <button className="w-[63px] bg-[#fdfdfd]">Raincloud</button>
            <button aria-label="Nieuwe pagina" className="w-[27px] bg-[#f2c811] text-[14px] font-bold">+</button>
          </footer>
        </div>
        <Visualizations />
        <Fields />
      </div>
    </div>
  );
};

export default App;
